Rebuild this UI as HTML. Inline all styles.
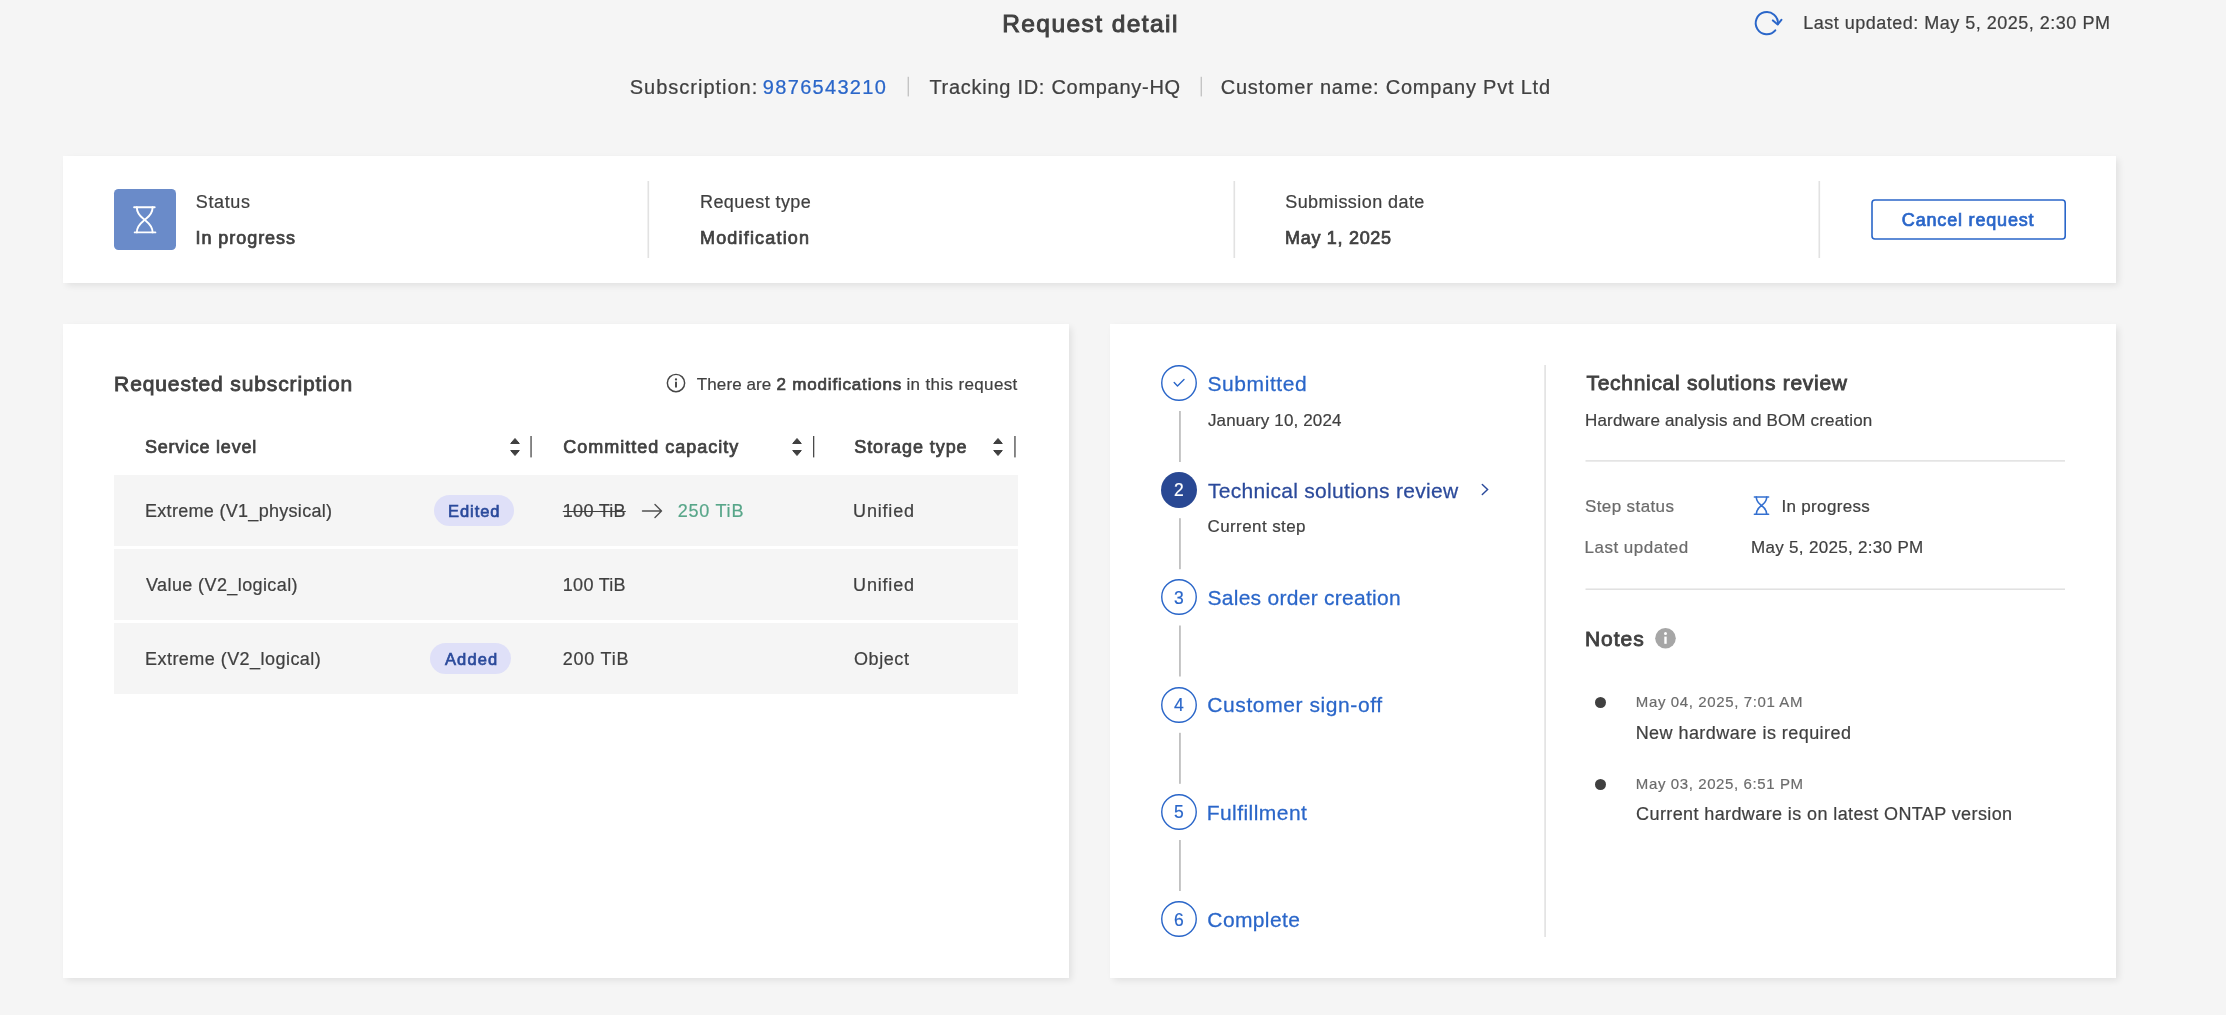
<!DOCTYPE html>
<html lang="en"><head><meta charset="utf-8"><title>Request detail</title>
<style>
html,body{margin:0;padding:0}
body{width:2226px;height:1015px;overflow:hidden;background:#f5f5f5;position:relative;font-family:"Liberation Sans",sans-serif;color:#404040}
.t{position:absolute;white-space:pre;line-height:1;font-weight:400;-webkit-text-stroke:0.012em currentColor}
.sb{-webkit-text-stroke:0.04em currentColor}
#tx{position:absolute;left:0;top:0;width:2226px;height:1015px;will-change:transform}
.a{position:absolute}
.card{position:absolute;background:#fff;box-shadow:2.5px 2.5px 7px rgba(0,0,0,.085)}
.row{position:absolute;left:114.3px;width:903.7px;height:71.2px;background:#f5f5f5}
.badge{position:absolute;height:30.6px;border-radius:16px;background:#dfe0f8}
svg{position:absolute;overflow:visible}
</style></head><body>
<!-- cards -->
<div class="card" style="left:63.2px;top:155.8px;width:2052.9px;height:127.5px"></div>
<div class="card" style="left:63.2px;top:324px;width:1006.3px;height:653.9px"></div>
<div class="card" style="left:1110px;top:324px;width:1006.1px;height:653.9px"></div>

<!-- header: refresh icon + separators -->
<svg style="left:1740px;top:0" width="60" height="46" viewBox="0 0 60 46" fill="none" stroke="#2a66c9" stroke-width="2" stroke-linecap="round" stroke-linejoin="round">
<path d="M35.3 30.3 A11.1 11.1 0 1 1 37.9 24"/><path d="M32.9 20.4 L37.7 24.5 L41.4 19.8"/></svg>

<!-- top card -->
<div class="a" style="left:114.3px;top:188.8px;width:61.6px;height:61.4px;border-radius:4.5px;background:#6a8bc9"></div>
<svg style="left:114.3px;top:188.8px" width="62" height="62" viewBox="0 0 62 62" fill="none" stroke="#fff" stroke-width="1.9" stroke-linecap="round">
<path d="M20.1 18.3 H40.7 M20.7 43.4 H41.4"/>
<path d="M22.8 18.3 C22.8 25.8 27.7 28.2 30.7 30.85 C33.7 33.5 38.6 35.9 38.6 43.4 M38.6 18.3 C38.6 25.8 33.7 28.2 30.7 30.85 C27.7 33.5 22.8 35.9 22.8 43.4"/></svg>
<svg style="left:1871px;top:199px" width="195" height="41" viewBox="0 0 195 41"><rect x="1" y="1" width="193.2" height="39" rx="3" fill="#fff" stroke="#2a66c9" stroke-width="1.6"/></svg>

<!-- left card -->
<svg style="left:666.1px;top:372.75px" width="20" height="20" viewBox="0 0 20 20" fill="none" stroke="#454545"><circle cx="10" cy="10" r="8.65" stroke-width="1.45"/><path d="M10 8.7 V14.4" stroke-width="1.9"/><circle cx="10" cy="6.4" r="1.15" fill="#454545" stroke="none"/></svg>
<div class="row" style="top:475px"></div>
<div class="row" style="top:549.2px"></div>
<div class="row" style="top:623.2px"></div>
<div class="badge" style="left:433.5px;top:495.2px;width:80.6px"></div>
<div class="badge" style="left:429.6px;top:643.3px;width:81.6px"></div>
<!-- sort icons + bars -->
<svg style="left:508.7px;top:436.4px" width="12" height="22" viewBox="0 0 12 22" fill="#404040" stroke="#404040" stroke-width="1" stroke-linejoin="round"><path d="M6 2.5 L10.3 7.5 H1.7 Z M6 19.5 L10.3 14.5 H1.7 Z"/></svg>
<svg style="left:790.8px;top:436.4px" width="12" height="22" viewBox="0 0 12 22" fill="#404040" stroke="#404040" stroke-width="1" stroke-linejoin="round"><path d="M6 2.5 L10.3 7.5 H1.7 Z M6 19.5 L10.3 14.5 H1.7 Z"/></svg>
<svg style="left:992.3px;top:436.4px" width="12" height="22" viewBox="0 0 12 22" fill="#404040" stroke="#404040" stroke-width="1" stroke-linejoin="round"><path d="M6 2.5 L10.3 7.5 H1.7 Z M6 19.5 L10.3 14.5 H1.7 Z"/></svg>
<!-- arrow -->
<svg style="left:640px;top:500px" width="24" height="22" viewBox="0 0 24 22" fill="none" stroke="#505050" stroke-width="1.4" stroke-linecap="round" stroke-linejoin="round"><path d="M2.5 11 H21.5 M15 4.5 L21.5 11 L15 17.5"/></svg>

<!-- steps -->
<svg style="left:1161px;top:364.8px" width="36" height="36" viewBox="0 0 36 36"><circle cx="18" cy="18" r="17.25" fill="#fff" stroke="#2a66c9" stroke-width="1.4"/></svg>
<svg style="left:1161px;top:472px" width="36" height="36" viewBox="0 0 36 36"><circle cx="18" cy="18" r="18" fill="#294893"/></svg>
<svg style="left:1161px;top:579.3px" width="36" height="36" viewBox="0 0 36 36"><circle cx="18" cy="18" r="17.25" fill="#fff" stroke="#2a66c9" stroke-width="1.4"/></svg>
<svg style="left:1161px;top:686.6px" width="36" height="36" viewBox="0 0 36 36"><circle cx="18" cy="18" r="17.25" fill="#fff" stroke="#2a66c9" stroke-width="1.4"/></svg>
<svg style="left:1161px;top:793.9px" width="36" height="36" viewBox="0 0 36 36"><circle cx="18" cy="18" r="17.25" fill="#fff" stroke="#2a66c9" stroke-width="1.4"/></svg>
<svg style="left:1161px;top:901.2px" width="36" height="36" viewBox="0 0 36 36"><circle cx="18" cy="18" r="17.25" fill="#fff" stroke="#2a66c9" stroke-width="1.4"/></svg>
<svg style="left:1170px;top:375px" width="18" height="16" viewBox="0 0 18 16" fill="none" stroke="#2a66c9" stroke-width="1.4" stroke-linecap="round" stroke-linejoin="round"><path d="M4.2 7.6 L7.5 11 L14 4.6"/></svg>
<svg style="left:1478px;top:482px" width="14" height="16" viewBox="0 0 14 16" fill="none" stroke="#2b4a9b" stroke-width="1.45" stroke-linecap="round" stroke-linejoin="miter"><path d="M4.3 2.5 L9.6 7.45 L4.3 12.6"/></svg>

<!-- detail -->
<svg style="left:1752px;top:495px" width="20" height="22" viewBox="0 0 20 22" fill="none" stroke="#3470d0" stroke-width="1.6" stroke-linecap="round"><path d="M2.4 2 H16.6 M2.4 19.2 H16.6"/><path d="M4.3 2 C4.3 7.2 7.5 8.8 9.5 10.6 C11.5 12.4 14.7 14 14.7 19.2 M14.7 2 C14.7 7.2 11.5 8.8 9.5 10.6 C7.5 12.4 4.3 14 4.3 19.2"/></svg>
<svg style="left:1655px;top:628px" width="21" height="21" viewBox="0 0 21 21"><circle cx="10.5" cy="10.3" r="10.3" fill="#a6a6a6"/><rect x="9.3" y="8.6" width="2.4" height="7.2" fill="#fff"/><circle cx="10.5" cy="5.4" r="1.5" fill="#fff"/></svg>
<div class="a" style="left:1595px;top:696.7px;width:11px;height:11px;border-radius:50%;background:#404040"></div>
<div class="a" style="left:1595px;top:778.6px;width:11px;height:11px;border-radius:50%;background:#404040"></div>
<svg style="left:0;top:0" width="2226" height="1015" viewBox="0 0 2226 1015">
<rect x="647.5" y="181" width="1.6" height="77" fill="#e2e2e2"/>
<rect x="1233.5" y="181" width="1.6" height="77" fill="#e2e2e2"/>
<rect x="1818.5" y="181" width="1.6" height="77" fill="#e2e2e2"/>
<rect x="1544.3" y="365" width="1.6" height="572" fill="#e2e2e2"/>
<rect x="1585.5" y="460.2" width="479.5" height="1.4" fill="#dedede"/>
<rect x="1585.5" y="588.5" width="479.5" height="1.4" fill="#dedede"/>
<rect x="1179.2" y="411" width="1.5" height="51" fill="#b2b2b2"/>
<rect x="1179.2" y="518.2" width="1.5" height="51" fill="#b2b2b2"/>
<rect x="1179.2" y="625.5" width="1.5" height="51" fill="#b2b2b2"/>
<rect x="1179.2" y="732.8" width="1.5" height="51" fill="#b2b2b2"/>
<rect x="1179.2" y="840" width="1.5" height="51" fill="#b2b2b2"/>
<rect x="907.6" y="76.8" width="1.4" height="19.6" fill="#c4c4c4"/>
<rect x="1200.6" y="76.8" width="1.4" height="19.6" fill="#c4c4c4"/>
<rect x="530.4" y="436" width="1.3" height="21.4" fill="#4a4a4a"/>
<rect x="813" y="436" width="1.3" height="21.4" fill="#4a4a4a"/>
<rect x="1014.3" y="436" width="1.3" height="21.4" fill="#4a4a4a"/>
</svg>

<div id="tx">
<span id="t0" class="t sb" style="left:1002.18px;top:12px;font-size:24.5px;color:#404040;letter-spacing:1.428px;">Request detail</span>
<span id="t1" class="t" style="left:629.70px;top:77px;font-size:20px;color:#404040;letter-spacing:1.000px;">Subscription:</span>
<span id="t2" class="t" style="left:762.87px;top:77px;font-size:20px;color:#2a66c9;letter-spacing:1.307px;">9876543210</span>
<span id="t3" class="t" style="left:929.41px;top:77px;font-size:20px;color:#404040;letter-spacing:0.720px;">Tracking ID: Company-HQ</span>
<span id="t4" class="t" style="left:1220.70px;top:77px;font-size:20px;color:#404040;letter-spacing:0.778px;">Customer name: Company Pvt Ltd</span>
<span id="t5" class="t" style="left:1803.19px;top:14px;font-size:18px;color:#404040;letter-spacing:0.500px;">Last updated: May 5, 2025, 2:30 PM</span>
<span id="t6" class="t" style="left:195.79px;top:193px;font-size:18px;color:#404040;letter-spacing:0.640px;">Status</span>
<span id="t7" class="t sb" style="left:195.44px;top:229px;font-size:18px;color:#404040;letter-spacing:0.954px;">In progress</span>
<span id="t8" class="t" style="left:700.00px;top:193px;font-size:18px;color:#404040;letter-spacing:0.431px;">Request type</span>
<span id="t9" class="t sb" style="left:700.00px;top:229px;font-size:18px;color:#404040;letter-spacing:1.178px;">Modification</span>
<span id="t10" class="t" style="left:1285.22px;top:193px;font-size:18px;color:#404040;letter-spacing:0.431px;">Submission date</span>
<span id="t11" class="t sb" style="left:1285.00px;top:229px;font-size:18px;color:#404040;letter-spacing:0.700px;">May 1, 2025</span>
<span id="t12" class="t sb" style="left:1901.83px;top:211px;font-size:18px;color:#2a66c9;letter-spacing:0.821px;">Cancel request</span>
<span id="t13" class="t sb" style="left:114.10px;top:373px;font-size:21px;color:#404040;letter-spacing:0.884px;">Requested subscription</span>
<span id="t14" class="t" style="left:696.81px;top:376px;font-size:17px;color:#404040;letter-spacing:0.096px;">There are</span>
<span id="t15" class="t sb" style="left:776.50px;top:376px;font-size:17px;color:#404040;letter-spacing:0.814px;">2 modifications</span>
<span id="t16" class="t" style="left:906.46px;top:376px;font-size:17px;color:#404040;letter-spacing:0.358px;">in this request</span>
<span id="t17" class="t sb" style="left:144.89px;top:438px;font-size:18px;color:#404040;letter-spacing:0.775px;">Service level</span>
<span id="t18" class="t sb" style="left:563.13px;top:438px;font-size:18px;color:#404040;letter-spacing:1.001px;">Committed capacity</span>
<span id="t19" class="t sb" style="left:854.20px;top:438px;font-size:18px;color:#404040;letter-spacing:0.943px;">Storage type</span>
<span id="t20" class="t" style="left:145.00px;top:502px;font-size:18px;color:#404040;letter-spacing:0.300px;">Extreme (V1_physical)</span>
<span id="t21" class="t sb" style="left:447.96px;top:503px;font-size:16.5px;color:#2b4a9b;letter-spacing:0.947px;">Edited</span>
<span id="t22" class="t" style="left:562.81px;top:502px;font-size:18px;color:#404040;letter-spacing:0.281px;text-decoration:line-through;text-decoration-thickness:1.2px;">100 TiB</span>
<span id="t23" class="t" style="left:677.76px;top:502px;font-size:18px;color:#58a689;letter-spacing:0.766px;">250 TiB</span>
<span id="t24" class="t" style="left:853.09px;top:502px;font-size:18px;color:#404040;letter-spacing:0.811px;">Unified</span>
<span id="t25" class="t" style="left:146.02px;top:576px;font-size:18px;color:#404040;letter-spacing:0.400px;">Value (V2_logical)</span>
<span id="t26" class="t" style="left:562.81px;top:576px;font-size:18px;color:#404040;letter-spacing:0.281px;">100 TiB</span>
<span id="t27" class="t" style="left:853.09px;top:576px;font-size:18px;color:#404040;letter-spacing:0.811px;">Unified</span>
<span id="t28" class="t" style="left:145.00px;top:650px;font-size:18px;color:#404040;letter-spacing:0.459px;">Extreme (V2_logical)</span>
<span id="t29" class="t sb" style="left:444.98px;top:651px;font-size:16.5px;color:#2b4a9b;letter-spacing:1.127px;">Added</span>
<span id="t30" class="t" style="left:562.76px;top:650px;font-size:18px;color:#404040;letter-spacing:0.785px;">200 TiB</span>
<span id="t31" class="t" style="left:853.99px;top:650px;font-size:18px;color:#404040;letter-spacing:0.588px;">Object</span>
<span id="t32" class="t" style="left:1207.47px;top:373px;font-size:21px;color:#2a66c9;letter-spacing:0.582px;">Submitted</span>
<span id="t33" class="t" style="left:1207.93px;top:412px;font-size:17px;color:#404040;letter-spacing:0.148px;">January 10, 2024</span>
<span id="t34" class="t" style="left:1207.96px;top:480px;font-size:21px;color:#2b4a9b;letter-spacing:0.296px;">Technical solutions review</span>
<span id="t35" class="t" style="left:1207.47px;top:518px;font-size:17px;color:#404040;letter-spacing:0.415px;">Current step</span>
<span id="t36" class="t" style="left:1207.47px;top:587px;font-size:21px;color:#2a66c9;letter-spacing:0.278px;">Sales order creation</span>
<span id="t37" class="t" style="left:1207.35px;top:694px;font-size:21px;color:#2a66c9;letter-spacing:0.588px;">Customer sign-off</span>
<span id="t38" class="t" style="left:1206.67px;top:802px;font-size:21px;color:#2a66c9;letter-spacing:0.453px;">Fulfillment</span>
<span id="t39" class="t" style="left:1207.35px;top:909px;font-size:21px;color:#2a66c9;letter-spacing:0.377px;">Complete</span>
<span id="t40" class="t" style="left:1174.00px;top:482px;font-size:17.5px;color:#ffffff;letter-spacing:0.000px;">2</span>
<span id="t41" class="t" style="left:1174.12px;top:590px;font-size:17.5px;color:#2a66c9;letter-spacing:0.000px;">3</span>
<span id="t42" class="t" style="left:1173.92px;top:697px;font-size:17.5px;color:#2a66c9;letter-spacing:0.000px;">4</span>
<span id="t43" class="t" style="left:1174.03px;top:804px;font-size:17.5px;color:#2a66c9;letter-spacing:0.000px;">5</span>
<span id="t44" class="t" style="left:1173.96px;top:912px;font-size:17.5px;color:#2a66c9;letter-spacing:0.000px;">6</span>
<span id="t45" class="t sb" style="left:1586.46px;top:372px;font-size:21px;color:#404040;letter-spacing:0.708px;">Technical solutions review</span>
<span id="t46" class="t" style="left:1584.98px;top:412px;font-size:17px;color:#404040;letter-spacing:0.172px;">Hardware analysis and BOM creation</span>
<span id="t47" class="t" style="left:1584.94px;top:498px;font-size:17px;color:#6b6b6b;letter-spacing:0.396px;">Step status</span>
<span id="t48" class="t" style="left:1781.45px;top:498px;font-size:17px;color:#404040;letter-spacing:0.333px;">In progress</span>
<span id="t49" class="t" style="left:1584.59px;top:539px;font-size:17px;color:#6b6b6b;letter-spacing:0.486px;">Last updated</span>
<span id="t50" class="t" style="left:1751.00px;top:539px;font-size:17px;color:#404040;letter-spacing:0.309px;">May 5, 2025, 2:30 PM</span>
<span id="t51" class="t sb" style="left:1584.96px;top:628px;font-size:21px;color:#404040;letter-spacing:0.989px;">Notes</span>
<span id="t52" class="t" style="left:1635.86px;top:694px;font-size:15px;color:#6b6b6b;letter-spacing:0.616px;">May 04, 2025, 7:01 AM</span>
<span id="t53" class="t" style="left:1635.64px;top:724px;font-size:18px;color:#404040;letter-spacing:0.446px;">New hardware is required</span>
<span id="t54" class="t" style="left:1635.86px;top:776px;font-size:15px;color:#6b6b6b;letter-spacing:0.602px;">May 03, 2025, 6:51 PM</span>
<span id="t55" class="t" style="left:1636.11px;top:805px;font-size:18px;color:#404040;letter-spacing:0.393px;">Current hardware is on latest ONTAP version</span>
</div>
</body></html>
